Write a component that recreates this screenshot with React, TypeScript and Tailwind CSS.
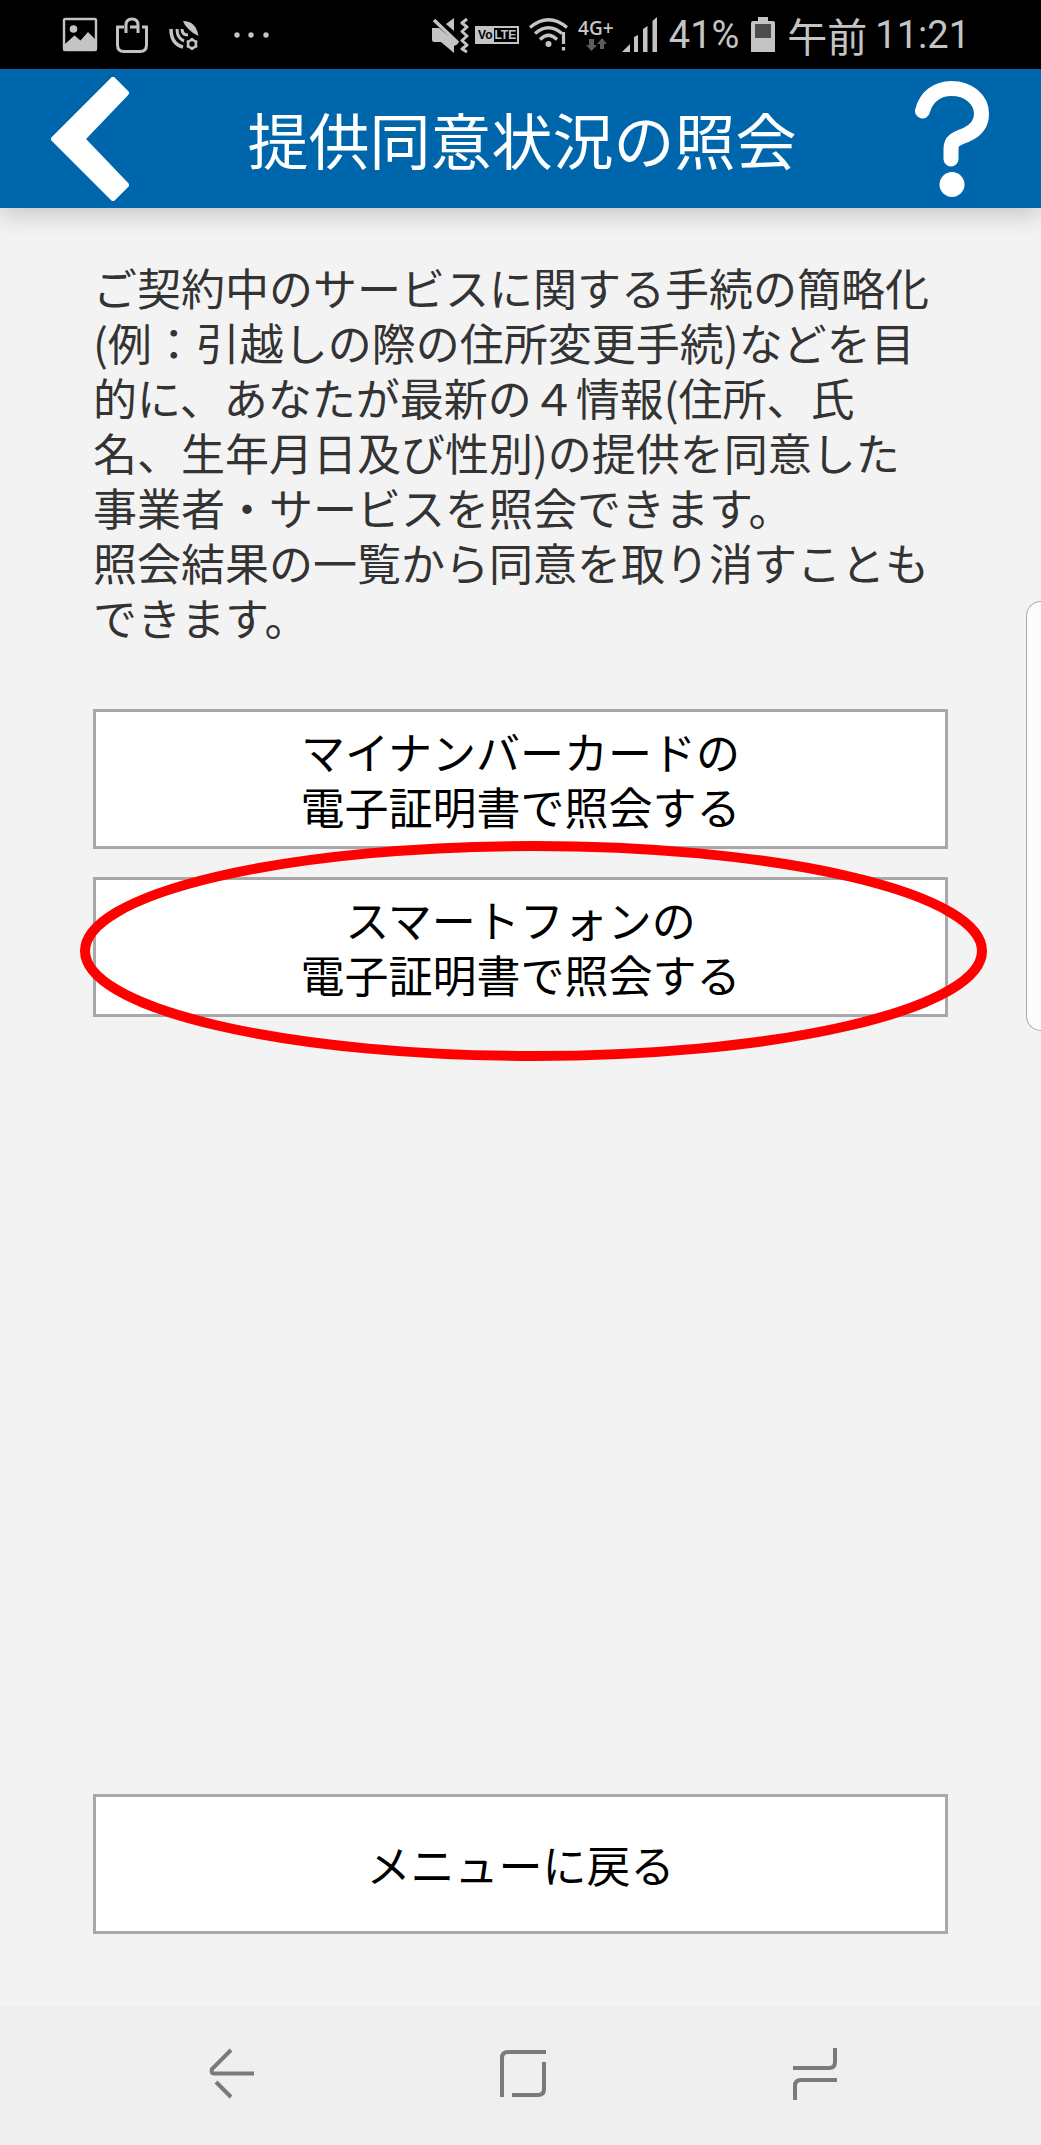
import { ReactNode } from "react";
import classNames from "clsx";

// status bar icons
const PictureIcon = () => (
  <svg width="36" height="36" viewBox="0 0 36 36" fill="none">
    <rect x="2" y="2" width="32" height="31" rx="1" stroke="#c4c4c4" strokeWidth="2.4" />
    <circle cx="11.500" cy="12" r="3.800" fill="#c4c4c4" />
    <path d="M3 27L12.500 18.500L18.500 23.500L26 15L33 22V32H3Z" fill="#c4c4c4" />
  </svg>
);

const BagIcon = () => (
  <svg width="36" height="40" viewBox="0 0 36 40" fill="none" stroke="#c4c4c4" strokeWidth="3">
    <path d="M10 12H3.500V30Q3.500 36.500 10 36.500H26Q32.500 36.500 32.500 30V12H28" />
    <path d="M12 18V10Q12 4 18 4Q24 4 24 10V18" />
    <path d="M16 12H24" />
  </svg>
);

const DishIcon = () => (
  <svg width="36" height="36" viewBox="0 0 36 36" fill="none" stroke="#c4c4c4">
    <path d="M17 4Q30 4 32.500 19Q27 17 22.500 12Q18 8 17 4Z" fill="#c4c4c4" stroke="none" />
    <path d="M5 12Q5 27 17 30" strokeWidth="3.500" />
    <path d="M11 12Q11 21 18 24" strokeWidth="3" />
    <path d="M16 12Q16 18 22 18" strokeWidth="3" />
    <circle cx="26" cy="27" r="4" strokeWidth="2.600" />
    <path
      d="M26 21V23M26 31V33M20.800 24L22.500 25M29.500 29L31.200 30M31.200 24L29.500 25M22.500 29L20.800 30"
      strokeWidth="2.600"
    />
  </svg>
);

const DotsIcon = () => (
  <svg width="36" height="36" viewBox="0 0 36 36" fill="#c4c4c4">
    <circle cx="3" cy="18" r="2.700" />
    <circle cx="17" cy="18" r="2.700" />
    <circle cx="32" cy="18" r="2.700" />
  </svg>
);

const MuteIcon = () => (
  <svg width="41" height="36" viewBox="0 0 41 36" fill="none">
    <path d="M2 11H9L28 27L24 29V36L11 25H4Q2 25 2 22Z" fill="#c4c4c4" />
    <path d="M16 7L24 1V14Z" fill="#c4c4c4" />
    <path d="M4 3L28 26" stroke="#c4c4c4" strokeWidth="3.500" />
    <path
      d="M37 2L32 6L37 10L32 14.500L37 19L32 23.500L37 28L32 32L37 35"
      stroke="#c4c4c4"
      strokeWidth="3"
      strokeLinejoin="round"
    />
  </svg>
);

const WifiIcon = () => (
  <svg width="48" height="36" viewBox="0 0 48 36" fill="none" stroke="#c4c4c4" strokeWidth="3.200">
    <path d="M7 10.500Q25.500 -5 44 10.500" />
    <path d="M12 16.500Q25.500 5 39 16.500" />
    <path d="M17 22.500Q25.500 14 34 22.500" />
    <circle cx="25.500" cy="27" r="3" fill="#c4c4c4" stroke="none" />
    <path d="M40.500 15V27M40.500 30V33.500" />
  </svg>
);

const TransferIcon = () => (
  <svg width="22" height="14" viewBox="0 0 22 14" fill="#5c5c5c">
    <path d="M4 1H9V7H12L6.500 13L1 7H4Z" />
    <path d="M15 11V6H12L17 0L22 6H19V11Z" />
  </svg>
);

const SignalIcon = () => (
  <svg width="40" height="36" viewBox="0 0 40 36" fill="#c4c4c4">
    <path d="M1 35L9 27V35Z" />
    <path d="M13 20L17 18V35H13Z" />
    <path d="M22 12L26.500 9V35H22Z" />
    <path d="M31.500 4L36 0V35H31.500Z" />
  </svg>
);

const BatteryIcon = () => (
  <svg width="24" height="36" viewBox="0 0 24 36">
    <path d="M7 0H17V4H22Q24 4 24 6V35H0V6Q0 4 2 4H7Z" fill="#c4c4c4" />
    <rect x="4" y="7" width="16" height="14" fill="#4d4d4d" />
  </svg>
);

function StatusBar() {
  return (
    <div className="flex h-[69px] items-center justify-between bg-black pr-[71px] pl-[62px] text-[#c4c4c4]">
      <div className="flex items-center gap-4">
        <PictureIcon />
        <BagIcon />
        <DishIcon />
        <div className="pl-4">
          <DotsIcon />
        </div>
      </div>

      <div className="flex items-center gap-1">
        <MuteIcon />
        <div className="flex h-[18px] w-11 border-2 border-[#c4c4c4] font-['Liberation_Sans',sans-serif] text-[12px] leading-[14px] font-bold">
          <span className="w-[17px] bg-[#c4c4c4] text-center text-black">Vo</span>
          <span className="flex-1 text-center">LTE</span>
        </div>
        <WifiIcon />
        <div className="flex w-[42px] flex-col items-center font-['Open_Sans',sans-serif] text-[19px] leading-5 font-semibold">
          <span>4G+</span>
          <TransferIcon />
        </div>
        <SignalIcon />
        <div className="flex items-center gap-3 pl-1 font-[Roboto,sans-serif] text-[38px] leading-[42px]">
          <span>41%</span>
          <BatteryIcon />
          <div className="flex items-center gap-2">
            <span className="font-['Noto_Sans_CJK_JP',sans-serif] text-[40px]">午前</span>
            <span>11:21</span>
          </div>
        </div>
      </div>
    </div>
  );
}

function Header() {
  return (
    <header className="flex h-[139px] items-center justify-between bg-[#0066ab] pr-[52px] pl-[51px] text-white shadow-[0_6px_24px_rgba(0,0,0,0.2)]">
      <button type="button" aria-label="戻る">
        <svg width="78" height="124" viewBox="0 0 78 124">
          <path
            d="M3 62L62 3L75 16L31 62L75 108L62 121Z"
            fill="white"
            stroke="white"
            strokeWidth="6"
            strokeLinejoin="round"
          />
        </svg>
      </button>
      <h1 className="text-[61px] leading-[72px]">提供同意状況の照会</h1>
      <button type="button" aria-label="ヘルプ">
        <svg width="74" height="116" viewBox="0 0 74 116" fill="none">
          <path
            d="M7.500 30C11 16 22 7.500 36.500 7.500C53 7.500 66.500 18 66.500 33C66.500 44 60 50 51 54C40 58 36 60 36 68V78"
            stroke="white"
            strokeWidth="15"
            strokeLinecap="round"
          />
          <circle cx="37" cy="103.500" r="12.500" fill="white" />
        </svg>
      </button>
    </header>
  );
}

function MenuButton({ children, className }: { children: ReactNode; className?: string }) {
  return (
    <button
      type="button"
      className={classNames(
        "h-[140px] w-full border-3 border-[#a8a8a8] bg-white text-[44px] leading-[55px] text-black",
        className
      )}
    >
      {children}
    </button>
  );
}

function NavBar() {
  return (
    <nav className="flex h-[139px] items-center justify-between bg-[#efefef] pr-[204px] pb-1 pl-[209px]">
      <button type="button" aria-label="Back">
        <svg width="46" height="52" viewBox="0 0 46 52" fill="none" stroke="#7a7a7a" strokeWidth="4">
          <path d="M22 2L3 21Q1.500 25.500 5 25.500H45" />
          <path d="M7 34L22 49" />
        </svg>
      </button>
      <button type="button" aria-label="Home">
        <svg width="48" height="52" viewBox="0 0 48 52" fill="none" stroke="#7a7a7a" strokeWidth="4">
          <path d="M2 49V10Q2 4 8 4H46" />
          <path d="M44 14V41Q44 47 38 47H12" />
        </svg>
      </button>
      <button type="button" aria-label="Recents">
        <svg width="44" height="52" viewBox="0 0 44 52" fill="none" stroke="#7a7a7a" strokeWidth="4">
          <path d="M0 20H36Q42 20 42 14V0" />
          <path d="M44 32H8Q2 32 2 38V52" />
        </svg>
      </button>
    </nav>
  );
}

export default function App() {
  return (
    <div
      lang="ja"
      className="relative flex min-h-screen flex-col overflow-hidden bg-[#f3f3f3] font-['Noto_Sans_CJK_JP',sans-serif]"
    >
      <StatusBar />
      <Header />

      <main className="flex flex-1 flex-col px-[93px] pt-[52px] pb-[72px]">
        <p className="pr-2 text-[44px] leading-[55px] text-[#333333]">
          ご契約中のサービスに関する手続の簡略化(例：引越しの際の住所変更手続)などを目的に、あなたが最新の４情報(住所、氏名、生年月日及び性別)の提供を同意した事業者・サービスを照会できます。
          <br />
          照会結果の一覧から同意を取り消すこともできます。
        </p>

        <div className="mt-16 mb-7 flex flex-col gap-7">
          <MenuButton>
            <span className="block">マイナンバーカードの</span>
            <span className="block">電子証明書で照会する</span>
          </MenuButton>
          <div className="relative">
            <MenuButton>
              <span className="block">スマートフォンの</span>
              <span className="block">電子証明書で照会する</span>
            </MenuButton>
            {/** red ring around the smartphone option */}
            <div className="pointer-events-none absolute -top-[31px] -right-[34px] -bottom-[39px] -left-[8px]">
              <svg className="h-full w-full overflow-visible" fill="none">
                <ellipse cx="50%" cy="50%" rx="50%" ry="50%" stroke="#ff0000" strokeWidth="10" />
              </svg>
            </div>
          </div>
        </div>

        <MenuButton className="mt-auto">メニューに戻る</MenuButton>
      </main>

      <NavBar />

      {/** edge panel handle */}
      <div className="absolute top-[601px] right-0 h-[430px] w-[15px] rounded-l-[18px] border border-r-0 border-[#adadad] bg-[#fcfcfc]"></div>
    </div>
  );
}
